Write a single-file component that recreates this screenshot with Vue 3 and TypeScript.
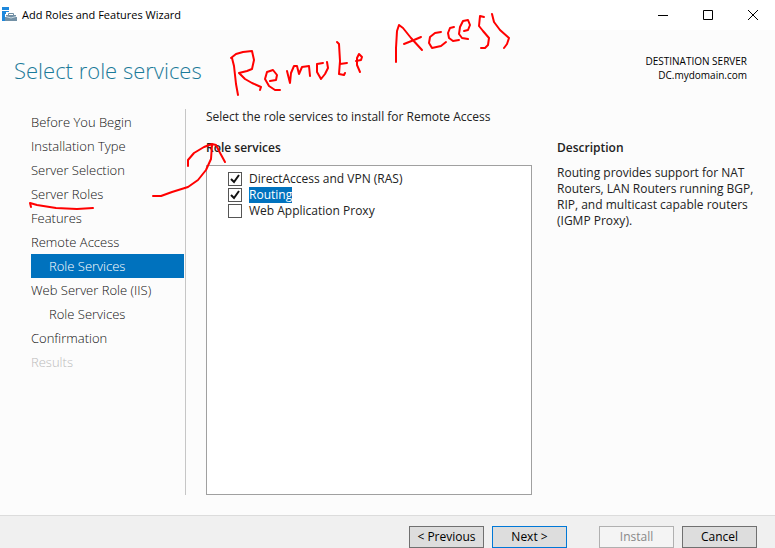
<script setup lang="ts">
import { ref } from 'vue'

interface Step {
  label: string
  nested?: boolean
  current?: boolean
  disabled?: boolean
}

const steps: Step[] = [
  { label: 'Before You Begin' },
  { label: 'Installation Type' },
  { label: 'Server Selection' },
  { label: 'Server Roles' },
  { label: 'Features' },
  { label: 'Remote Access' },
  { label: 'Role Services', nested: true, current: true },
  { label: 'Web Server Role (IIS)' },
  { label: 'Role Services', nested: true },
  { label: 'Confirmation' },
  { label: 'Results', disabled: true },
]

const services = ref([
  { id: 'ras', label: 'DirectAccess and VPN (RAS)', checked: true },
  { id: 'routing', label: 'Routing', checked: true },
  { id: 'proxy', label: 'Web Application Proxy', checked: false },
])
const selected = ref('routing')
</script>

<template>
  <div class="window">
    <header class="titlebar">
      <svg class="app-icon" width="16" height="16" viewBox="0 0 16 16" aria-hidden="true">
        <path d="M1 0h7v3H1zM1 4h7v1H5v2H4v7H1z" fill="#1e88dc" />
        <path d="M7.5 9V6.5h5V9" fill="none" stroke="#6f8ea3" />
        <path d="M5 8h10v2H5zM4 10h12v4H4z" fill="#7391a6" />
        <path d="M5 9.5l5 1.5 5-1.5" fill="none" stroke="#c9d8e1" />
      </svg>
      <span class="caption">Add Roles and Features Wizard</span>
      <div class="window-buttons">
        <button type="button" aria-label="Minimize">
          <svg width="12" height="12" viewBox="0 0 12 12"><path d="M1 6.5h10" /></svg>
        </button>
        <button type="button" aria-label="Maximize">
          <svg width="12" height="12" viewBox="0 0 12 12"><path d="M1.5 1.5h9v9h-9z" /></svg>
        </button>
        <button type="button" aria-label="Close">
          <svg width="12" height="12" viewBox="0 0 12 12"><path d="M1 1l10 10M11 1L1 11" /></svg>
        </button>
      </div>
    </header>

    <div class="heading">
      <h1>Select role services</h1>
      <div class="server">
        <span>DESTINATION SERVER</span>
        <span>DC.mydomain.com</span>
      </div>
    </div>

    <div class="body">
      <nav class="steps">
        <a
          v-for="(step, i) in steps"
          :key="i"
          href="#"
          :class="{ nested: step.nested, current: step.current, disabled: step.disabled }"
          @click.prevent
        >{{ step.label }}</a>
      </nav>

      <main class="content">
        <p class="intro">Select the role services to install for Remote Access</p>
        <div class="columns">
          <section class="roles">
            <h2>Role services</h2>
            <div class="list">
              <label v-for="s in services" :key="s.id" @click="selected = s.id">
                <input v-model="s.checked" type="checkbox" />
                <span :class="{ selected: selected === s.id }">{{ s.label }}</span>
              </label>
            </div>
          </section>
          <section class="description">
            <h2>Description</h2>
            <p>Routing provides support for NAT Routers, LAN Routers running BGP, RIP, and multicast capable routers (IGMP Proxy).</p>
          </section>
        </div>
      </main>
    </div>

    <footer class="actions">
      <button type="button">&lt; Previous</button>
      <button type="button" class="default">Next &gt;</button>
      <button type="button" class="install" disabled>Install</button>
      <button type="button">Cancel</button>
    </footer>

    <!-- Hand-drawn marker notes over the window -->
    <svg class="ink" width="520" height="220" viewBox="0 0 520 220" role="img" aria-label="Remote Access">
      <path d="M232 58L234 66L236 84L238 95M231 58L236 54L243 52L252 51L254 60L252 69L247 71L239 73L245 79L252 83L261 87L260 90" />
      <path d="M270 81L276 80L277 75L273 70L267 72L265 79L269 86L275 90L280 90" />
      <path d="M287 71L290 83L291 73L294 66L297 66L299 74L302 67L309 66L310 76" />
      <path d="M317 64L317 72L321 79L325 74L328 68L327 62M317 64L323 63" />
      <path d="M337 42L339 44L340 61L339 74L344 75L345 73M340 64L347 63" />
      <path d="M356 61L361 60L362 57L359 54L357 58L357 65L360 72" />
      <path d="M396 62L396 48L397 31L399 25L403 28L411 38L422 50M404 44L414 40L421 37" />
      <path d="M441 32L435 33L430 37L429 43L432 48L441 46L446 42" />
      <path d="M454 27L450 28L448 33L449 38L453 41L459 40" />
      <path d="M464 31L468 30L470 25L468 20L463 21L460 27L459 34L462 38L468 39" />
      <path d="M484 17L480 16L479 26L483 31L489 38L488 45L485 48L481 48" />
      <path d="M492 14L494 22L500 30L509 38L507 44L504 48" />
      <path d="M153 196L161 196L172 192L188 187L198 180L206 170L211 159L212 145M188 166L188 160L194 153L204 147L212 144L216 145L219 151L225 162" />
      <path d="M31 207L30 203L37 205L56 208L77 209L93 208" />
    </svg>
  </div>
</template>

<style>
body {
  margin: 0;
}
</style>

<style scoped>
.window {
  position: relative;
  display: flex;
  flex-direction: column;
  min-height: 100vh;
  box-sizing: border-box;
  background: #fcfcfc;
  color: #222;
  font: 12px/16px "Segoe UI", "Open Sans", "Noto Sans", sans-serif;
}

h1,
h2,
p {
  margin: 0;
}

.titlebar {
  display: flex;
  align-items: center;
  height: 30px;
  background: #fff;
  color: #000;
}

.app-icon {
  margin: 0 5px 0 1px;
}

.caption {
  flex: 1;
  font-size: 11px;
}

.window-buttons {
  display: flex;
}

.window-buttons button {
  display: grid;
  place-items: center;
  width: 45px;
  height: 30px;
  padding: 0;
  border: 0;
  background: none;
}

.window-buttons svg {
  fill: none;
  stroke: #000;
}

.heading {
  display: flex;
  justify-content: space-between;
  align-items: flex-start;
  padding: 24px 28px 20px 14px;
}

h1 {
  color: #1b7a99;
  font-size: 22px;
  font-weight: 300;
  line-height: 32px;
}

.server {
  display: flex;
  flex-direction: column;
  color: #000;
  font-size: 10px;
  line-height: 14px;
  text-align: right;
}

.body {
  display: flex;
  flex: 1;
  padding: 3px 16px 20px 31px;
}

.steps {
  display: flex;
  flex-direction: column;
  width: 153px;
  padding: 1px 1px 0 0;
  border-right: 1px solid #c6c6c6;
}

.steps a {
  color: #111;
  font-size: 13px;
  line-height: 24px;
  font-weight: 300;
  text-decoration: none;
}

.steps .nested {
  padding-left: 18px;
}

.steps .current {
  background: #0072be;
  color: #fff;
}

.steps .disabled {
  color: #bbb;
}

.content {
  display: flex;
  flex: 1;
  flex-direction: column;
  gap: 15px;
  padding-left: 20px;
}

.columns {
  display: flex;
  flex: 1;
  gap: 25px;
}

.roles {
  display: flex;
  flex: 1;
  flex-direction: column;
}

h2 {
  padding-bottom: 9px;
  font-size: 12px;
  font-weight: 600;
  line-height: 16px;
}

.list {
  display: flex;
  flex: 1;
  flex-direction: column;
  padding: 5px 21px;
  border: 1px solid #a0a0a0;
  background: #fff;
}

.list label {
  display: flex;
  align-items: center;
  gap: 7px;
}

.list input {
  appearance: none;
  box-sizing: border-box;
  width: 14px;
  height: 14px;
  margin: 0;
  border: 1px solid #555;
  background: #fff;
}

.list input:checked {
  background: #fff url("data:image/svg+xml,%3Csvg xmlns='http://www.w3.org/2000/svg' viewBox='0 0 12 12'%3E%3Cpath d='M2 6l3 3 5-7' fill='none' stroke='%23111' stroke-width='2'/%3E%3C/svg%3E");
}

.selected {
  background: #0072be;
  color: #fff;
}

.description {
  width: 202px;
}

.actions {
  display: flex;
  gap: 8px;
  justify-content: flex-end;
  padding: 10px 18px 0 0;
  border-top: 1px solid #dcdcdc;
  background: #f0f0f0;
}

.actions button {
  width: 75px;
  height: 22px;
  padding: 0;
  border: 1px solid #707070;
  background: #ddd;
  color: #000;
  font: inherit;
}

.actions .default {
  border-color: #0078d7;
}

.actions .install {
  margin-left: 24px;
  border-color: #b0b0b0;
  background: #f4f4f4;
  color: #888;
}

.ink {
  position: absolute;
  top: 0;
  left: 0;
  pointer-events: none;
  fill: none;
  stroke: #f00;
  stroke-width: 2;
  stroke-linecap: round;
  stroke-linejoin: round;
}
</style>
